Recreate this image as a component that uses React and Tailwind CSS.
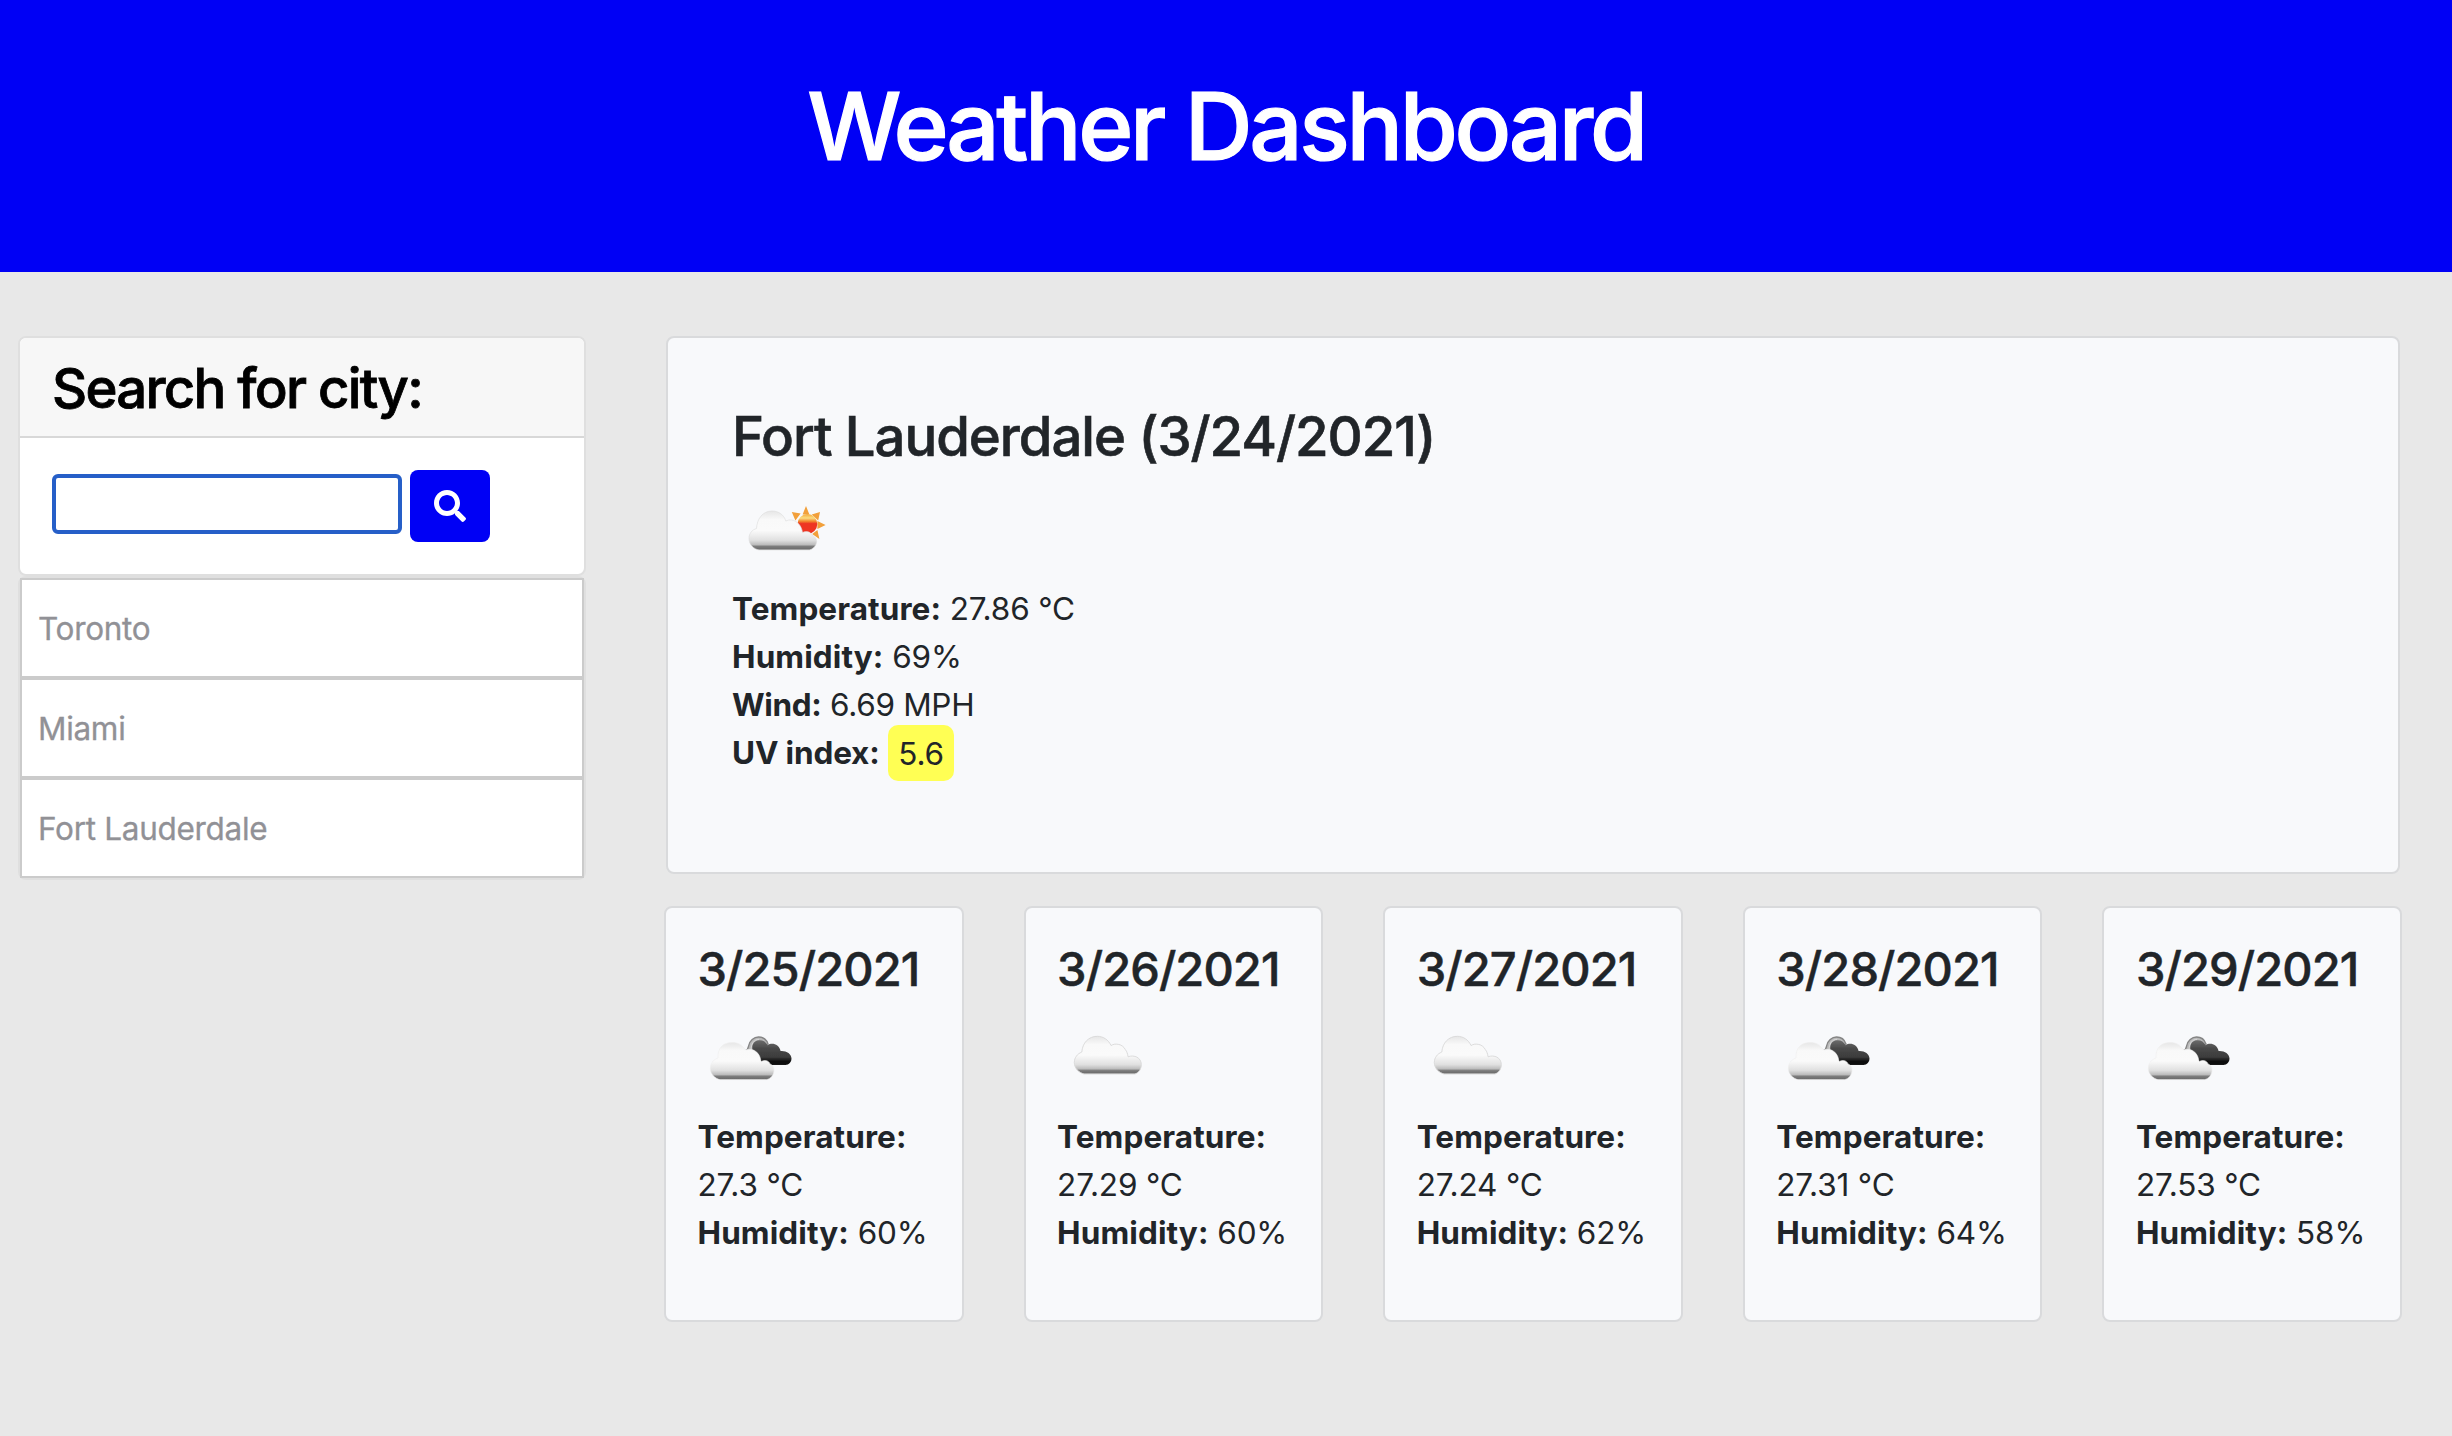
import React from "react";
import { FaSearch } from "react-icons/fa";

const cities = ["Toronto", "Miami", "Fort Lauderdale"];

const forecast = [
  { date: "3/25/2021", temp: "27.3 °C", humidity: "60%", icon: "broken" },
  { date: "3/26/2021", temp: "27.29 °C", humidity: "60%", icon: "cloud" },
  { date: "3/27/2021", temp: "27.24 °C", humidity: "62%", icon: "cloud" },
  { date: "3/28/2021", temp: "27.31 °C", humidity: "64%", icon: "broken" },
  { date: "3/29/2021", temp: "27.53 °C", humidity: "58%", icon: "broken" },
];

function CloudGradient({ id }) {
  return (
    <linearGradient id={id} x1="0" y1="0" x2="0" y2="1">
      <stop offset="0" stopColor="#e6e6e6" />
      <stop offset="0.22" stopColor="#f9f9f9" />
      <stop offset="0.5" stopColor="#fafafa" />
      <stop offset="0.75" stopColor="#e0e0e0" />
      <stop offset="0.86" stopColor="#bdbdbd" />
      <stop offset="0.91" stopColor="#7c7c7c" />
      <stop offset="0.97" stopColor="#6e6e6e" />
      <stop offset="1" stopColor="#a0a0a0" />
    </linearGradient>
  );
}

function SunCloudIcon() {
  return (
    <svg className="block size-[100px]" viewBox="0 0 100 100" fill="none">
      <defs>
        <CloudGradient id="sc-cloud" />
        <linearGradient id="sc-sun" x1="0" y1="0" x2="0" y2="1">
          <stop offset="0" stopColor="#f4a93a" />
          <stop offset="0.2" stopColor="#fbdc80" />
          <stop offset="0.36" stopColor="#f28a2e" />
          <stop offset="0.48" stopColor="#ee3524" />
          <stop offset="1" stopColor="#ee3524" />
        </linearGradient>
        <filter id="sc-soft">
          <feGaussianBlur stdDeviation="0.7" />
        </filter>
      </defs>
      <g filter="url(#sc-soft)">
        <path
          fill="#f2a03a"
          d="M74 22l3.400 8.500h-6.800zM59.800 28l8.800 1.500-5.200 7zM88 28l-1.800 8.500-6.500-6zM93.600 41l-8.200 4v-8zM87.400 55l-7.200-5 5.200-4z"
        />
        <circle cx="75.4" cy="40" r="9.9" fill="url(#sc-sun)" />
        <path
          fill="url(#sc-cloud)"
          stroke="#dcdcdc"
          strokeWidth="0.6"
          d="M27 66C22 65 17 61 17 54.500C17 49.500 20 45.800 24.500 44.500C25 35 30.500 27 40 27C47 27 52 31 53.800 37C57 35.200 61.500 35.800 63.800 37.500C67.500 39.500 70 44 70.500 48.500C74 46.800 78.500 47.500 80 51C83.500 53 85 56 84.500 58.500C84 62 81 65 77.500 66Z"
        />
      </g>
    </svg>
  );
}

function CloudIcon() {
  return (
    <svg className="block size-[100px]" viewBox="0 0 100 100" fill="none">
      <defs>
        <CloudGradient id="c-cloud" />
        <filter id="c-soft">
          <feGaussianBlur stdDeviation="0.7" />
        </filter>
      </defs>
      <g filter="url(#c-soft)">
        <path
          fill="url(#c-cloud)"
          stroke="#d8d8d8"
          strokeWidth="0.9"
          d="M27 62C22 60.500 17.300 56.500 17.300 50.500C17.300 45.500 20.500 41.800 24.800 40C25.500 31 31.500 24.300 40.300 24.300C46.500 24.300 51.500 28 54 33.500C58.500 30.800 65.500 32 68.300 37.500C70 39.800 70.800 42 71 44.800C77 42.500 84.300 45.500 84.300 52.500C84.300 57 82 60.500 78 62Z"
        />
      </g>
    </svg>
  );
}

function BrokenCloudsIcon() {
  return (
    <svg className="block size-[100px]" viewBox="0 0 100 100" fill="none">
      <defs>
        <CloudGradient id="b-cloud" />
        <linearGradient id="b-dark" x1="0" y1="0" x2="0" y2="1">
          <stop offset="0" stopColor="#6b6b6b" />
          <stop offset="0.35" stopColor="#484848" />
          <stop offset="0.68" stopColor="#3c3c3c" />
          <stop offset="0.88" stopColor="#050505" />
          <stop offset="1" stopColor="#1a1a1a" />
        </linearGradient>
        <filter id="b-soft">
          <feGaussianBlur stdDeviation="0.7" />
        </filter>
      </defs>
      <g filter="url(#b-soft)">
        <path
          fill="#b9b9b9"
          stroke="#858585"
          strokeWidth="1.4"
          d="M47 39C50 38 50.300 36 50.600 34C51.500 28.500 56 25 60.500 25C65 25 68.500 27.500 70 32L56 39Z"
        />
        <path stroke="#d8d8d8" strokeWidth="1" d="M53 38C53 32 56 27.300 61 27.300" />
        <path
          fill="url(#b-dark)"
          d="M54.500 38C53.500 33 56 28.500 61 28.300C65 28 68 30 69.500 33.200C74 30 81 32 82.600 39C88 38.500 93.500 41.500 93.500 46.500C93.500 50 91 53 87.500 53H66Z"
        />
        <path
          fill="url(#b-cloud)"
          stroke="#eeeeee"
          strokeWidth="0.6"
          d="M22 67.700C17 66.500 12.300 62 12.300 56.500C12.300 51.500 15.300 47.500 20 46C19.500 36 25 30.500 34 30.500C40 30.500 44.500 33 47.500 38C55 35.500 62.300 40.500 63 49.700C66.500 47.500 71 48.500 72 52C75 53 76 55.500 76 58C76 63 73 66.500 68.500 67.700Z"
        />
      </g>
    </svg>
  );
}

function DayCard({ day }) {
  return (
    <article className="h-[416px] rounded-lg border-2 border-[#d9dadc] bg-[#f8f9fb] pl-[31.5px] pt-8">
      <h3 className="whitespace-nowrap text-[47px] font-medium leading-[58px] tracking-[-0.9px] [-webkit-text-stroke:0.5px]">
        {day.date}
      </h3>
      <div className="mt-[14px]">{day.icon === "broken" ? <BrokenCloudsIcon /> : <CloudIcon />}</div>
      <div className="pt-px text-[31.5px] leading-[48px] tracking-[-0.15px]">
        <p className="font-bold tracking-[0.1px]">Temperature:</p>
        <p>{day.temp}</p>
        <p className="whitespace-nowrap">
          <b className="font-bold tracking-[0.1px]">Humidity:</b> {day.humidity}
        </p>
      </div>
    </article>
  );
}

export default function App() {
  return (
    <div className="min-h-[1436px] w-[2452px] bg-[#e8e8e8] font-['Inter',sans-serif] text-[#212529]">
      <header className="h-[272px] bg-[#0000f5] pt-[68px] text-center">
        <h1 className="text-[94px] font-medium leading-[116px] tracking-[-3.35px] text-white [-webkit-text-stroke:1.2px]">
          Weather Dashboard
        </h1>
      </header>

      <div className="flex items-start pl-[18px] pt-16">
        <aside className="w-[568px]">
          <section className="h-[240px] overflow-hidden rounded-lg border-2 border-[#dfdfdf] bg-white">
            <div className="h-[100px] border-b-2 border-[#d8d8d8] bg-[#f7f7f7] pl-8 pt-4">
              <h2 className="text-[54.5px] font-medium leading-[68px] tracking-[-1.75px] text-black [-webkit-text-stroke:0.8px]">
                Search for city:
              </h2>
            </div>
            <div className="flex gap-2 pl-8 pt-8">
              <input className="mt-1 h-[60px] w-[350px] rounded-[6px] border-4 border-[#265fc8] bg-white outline-none" />
              <button className="flex h-[72px] w-20 items-center justify-center rounded-lg bg-[#0000f5] text-white">
                <FaSearch size={32} />
              </button>
            </div>
          </section>
          <ul className="rounded-lg border-2 border-[#dfdfdf]">
            {cities.map((city) => (
              <li
                key={city}
                className="h-[100px] border-2 border-[#cbcbcb] bg-white pl-4 pt-[25px] text-[31.5px] leading-[48px] tracking-[-0.3px] text-[#919196] [-webkit-text-stroke:0.3px]"
              >
                {city}
              </li>
            ))}
          </ul>
        </aside>

        <main className="ml-[78px] w-[1738px]">
          <section className="mx-0.5 h-[538px] rounded-lg border-2 border-[#d9dadc] bg-[#f8f9fb] pl-16 pt-16">
            <h2 className="text-[54.5px] font-medium leading-[68px] tracking-[-1.06px] [-webkit-text-stroke:0.6px]">
              Fort Lauderdale (3/24/2021)
            </h2>
            <div className="mt-[14px]">
              <SunCloudIcon />
            </div>
            <div className="pt-px text-[31.5px] leading-[48px] tracking-[-0.15px]">
              <p>
                <b className="font-bold tracking-[0.1px]">Temperature:</b> 27.86 °C
              </p>
              <p>
                <b className="font-bold tracking-[0.1px]">Humidity:</b> 69%
              </p>
              <p className="tracking-[-0.3px]">
                <b className="font-bold tracking-[-0.35px]">Wind:</b> 6.69 MPH
              </p>
              <p>
                <b className="font-bold tracking-[-0.15px]">UV index:</b>{" "}
                <span className="rounded-[10px] bg-[#ffff54] px-[10px] py-[8.5px]">5.6</span>
              </p>
            </div>
          </section>
          <section className="mt-8 grid grid-cols-5 gap-[60px]">
            {forecast.map((day) => (
              <DayCard key={day.date} day={day} />
            ))}
          </section>
        </main>
      </div>
    </div>
  );
}
